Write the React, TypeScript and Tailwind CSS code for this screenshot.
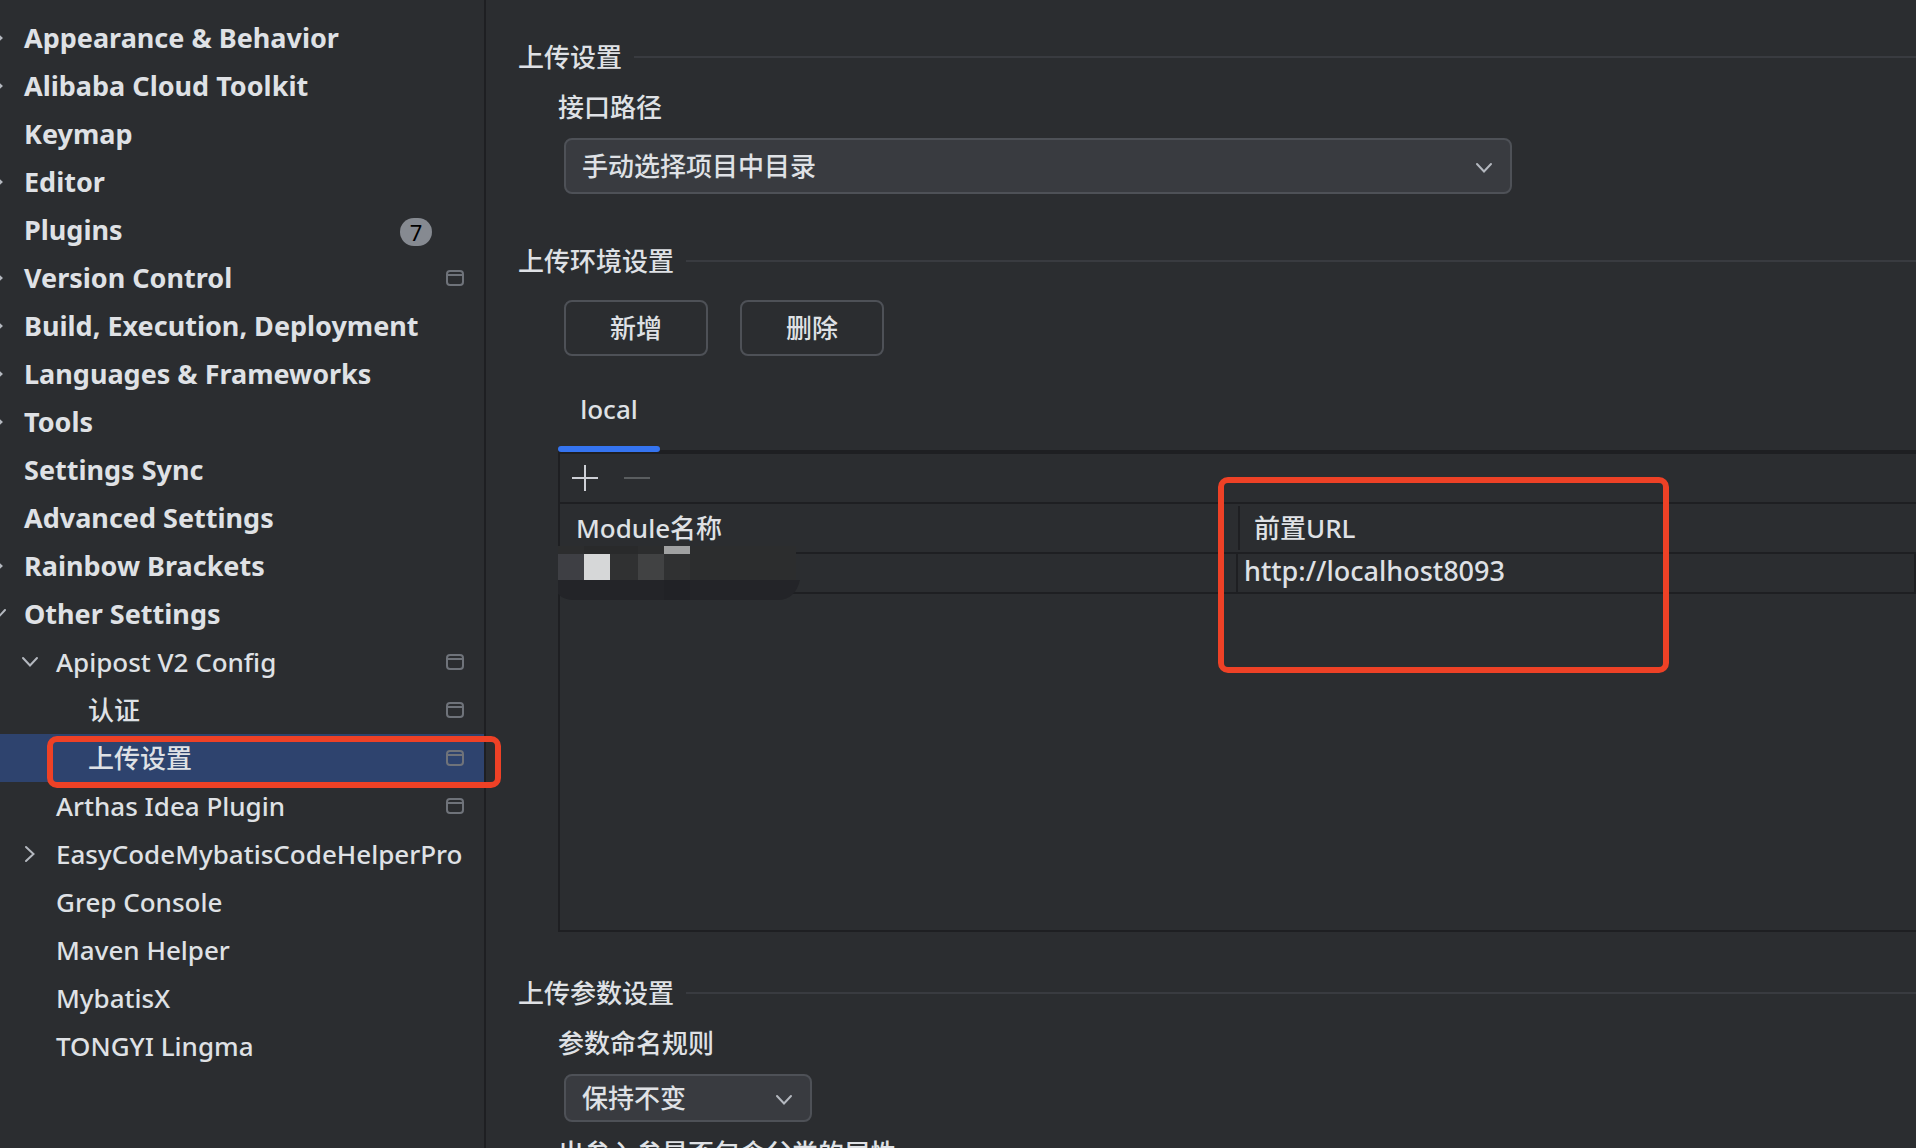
import { useState } from 'react';
import clsx from 'clsx';

type NavItem = {
  label: string;
  level?: 0 | 1 | 2;
  arrow?: 'right' | 'down';
  badge?: number;
  project?: boolean;
};

const NAV_ITEMS: NavItem[] = [
  { label: 'Appearance & Behavior', arrow: 'right' },
  { label: 'Alibaba Cloud Toolkit', arrow: 'right' },
  { label: 'Keymap' },
  { label: 'Editor', arrow: 'right' },
  { label: 'Plugins', badge: 7 },
  { label: 'Version Control', arrow: 'right', project: true },
  { label: 'Build, Execution, Deployment', arrow: 'right' },
  { label: 'Languages & Frameworks', arrow: 'right' },
  { label: 'Tools', arrow: 'right' },
  { label: 'Settings Sync' },
  { label: 'Advanced Settings' },
  { label: 'Rainbow Brackets', arrow: 'right' },
  { label: 'Other Settings', arrow: 'down' },
  { label: 'Apipost V2 Config', level: 1, arrow: 'down', project: true },
  { label: '认证', level: 2, project: true },
  { label: '上传设置', level: 2, project: true },
  { label: 'Arthas Idea Plugin', level: 1, project: true },
  { label: 'EasyCodeMybatisCodeHelperPro', level: 1, arrow: 'right' },
  { label: 'Grep Console', level: 1 },
  { label: 'Maven Helper', level: 1 },
  { label: 'MybatisX', level: 1 },
  { label: 'TONGYI Lingma', level: 1 },
];

function Chevron({ direction, className }: { direction: 'right' | 'down'; className?: string }) {
  return (
    <svg
      viewBox="0 0 32 32"
      fill="none"
      stroke="currentColor"
      strokeWidth="2"
      strokeLinecap="round"
      className={clsx('size-8 shrink-0 text-[#b4b8bf]', className)}
    >
      <path d={direction === 'down' ? 'M9 12l7 7.500l7-7.500' : 'M12 9l7.500 7l-7.500 7'} />
    </svg>
  );
}

function ProjectIcon() {
  return (
    <svg viewBox="0 0 18 16" fill="none" stroke="#6f737a" strokeWidth="2" className="h-4 w-[18px]">
      <rect x="1" y="1" width="16" height="14" rx="3" />
      <path d="M1 5h16" />
    </svg>
  );
}

function NavRow({ item, selected, onSelect }: { item: NavItem; selected: boolean; onSelect: () => void }) {
  const level = item.level ?? 0;
  return (
    <li className={clsx('relative h-12', selected && 'bg-[#2e436e]')}>
      <a
        href="#"
        onClick={(e) => {
          e.preventDefault();
          onSelect();
        }}
        className={clsx(
          'flex h-full items-center pr-5 whitespace-nowrap',
          level === 0 && '-ml-[18px] text-[27px] font-bold',
          level === 1 && 'pl-3.5',
          level === 2 && 'pl-[46px]',
        )}
      >
        {item.arrow ? <Chevron direction={item.arrow} /> : <span className="w-8 shrink-0" />}
        <span className="ml-2.5 flex-1">{item.label}</span>
        {item.badge && (
          <span className="mt-1 mr-8 flex h-7 w-8 items-center justify-center rounded-full bg-[#868a91] text-[22px] font-normal text-black">
            {item.badge}
          </span>
        )}
        {item.project && <ProjectIcon />}
      </a>
      {selected && (
        <div className="pointer-events-none absolute top-0.5 -right-[17px] left-[47px] z-10 h-[52px] rounded-[10px] border-[6px] border-[#ee4126]" />
      )}
    </li>
  );
}

function SectionTitle({ children, className }: { children: string; className?: string }) {
  return (
    <h2 className={clsx('flex h-[38px] items-center gap-3 whitespace-nowrap', className)}>
      {children}
      <span className="h-0.5 flex-1 bg-[#393b40]" />
    </h2>
  );
}

function Dropdown({ id, options, className }: { id: string; options: string[]; className?: string }) {
  return (
    <div className={clsx('relative ml-[46px]', className)}>
      <select
        id={id}
        className="size-full appearance-none rounded-lg border-2 border-[#4e5157] bg-[#393b40] pr-12 pl-4 outline-none"
      >
        {options.map((o) => (
          <option key={o}>{o}</option>
        ))}
      </select>
      <Chevron direction="down" className="pointer-events-none absolute top-1 right-3 bottom-0 my-auto" />
    </div>
  );
}

function OutlineButton({ children }: { children: string }) {
  return (
    <button type="button" className="h-14 w-36 rounded-lg border-2 border-[#4e5157]">
      {children}
    </button>
  );
}

// Pixelated module name, kept private
function MaskedName() {
  return (
    <svg
      viewBox="0 0 242 54"
      className="pointer-events-none absolute -top-2 -left-0.5 h-[54px] w-[242px]"
      aria-hidden="true"
    >
      <rect width="238" height="34" fill="#2c2d2e" />
      <path d="M0 34H242Q237 54 220 54H16Q6 54 0 48Z" fill="#232428" />
      <rect x="106" y="34" width="26" height="20" fill="#212226" />
      <rect x="26" width="54" height="8" fill="#292a2b" />
      <rect x="106" width="26" height="8" fill="#a0a1a2" />
      <rect y="8" width="26" height="26" fill="#3e3f44" />
      <rect x="26" y="8" width="26" height="26" fill="#d6d7d8" />
      <rect x="52" y="8" width="28" height="26" fill="#303132" />
      <rect x="80" y="8" width="26" height="26" fill="#414243" />
      <rect x="106" y="8" width="26" height="26" fill="#303132" />
    </svg>
  );
}

function EnvironmentPanel() {
  return (
    <div className="mt-2.5 ml-10">
      <div role="tablist" className="flex h-[88px] border-b-4 border-[#1e1f22]">
        <button type="button" role="tab" aria-selected="true" className="relative h-[86px] w-[102px]">
          local
          <span className="absolute inset-x-0 bottom-0 h-1.5 rounded-full bg-[#3574f0]" />
        </button>
      </div>
      <div className="relative h-[478px] border-b-2 border-l-2 border-[#1e1f22]">
        <div className="flex h-[50px] items-center gap-[26px] border-b-2 border-[#1e1f22] pl-3">
          <button type="button" aria-label="Add">
            <svg viewBox="0 0 26 26" className="size-[26px]" stroke="#ced0d6" strokeWidth="2">
              <path d="M13 0v26M0 13h26" />
            </svg>
          </button>
          <button type="button" aria-label="Remove" disabled>
            <svg viewBox="0 0 26 26" className="size-[26px]" stroke="#5a5d5f" strokeWidth="2">
              <path d="M0 13h26" />
            </svg>
          </button>
        </div>
        <table className="w-full table-fixed border-separate border-spacing-0 text-left">
          <thead>
            <tr className="h-[50px]">
              <th className="border-b-2 border-[#1e1f22] p-0 pl-4 font-medium">Module名称</th>
              <th className="border-b-2 border-[#1e1f22] p-0 font-medium">
                <div className="flex h-11 items-center border-l-2 border-[#1e1f22] pl-3.5">前置URL</div>
              </th>
            </tr>
          </thead>
          <tbody>
            <tr className="h-10">
              <td className="relative border-r-2 border-b-2 border-[#1e1f22] p-0">
                <MaskedName />
              </td>
              <td className="border-r-2 border-b-2 border-[#1e1f22] p-0 pb-1 pl-1.5 text-[27px] leading-8">
                http://localhost8093
              </td>
            </tr>
          </tbody>
        </table>
        <div className="pointer-events-none absolute top-[23px] left-[658px] h-[196px] w-[451px] rounded-[10px] border-[6px] border-[#ee4126]" />
      </div>
    </div>
  );
}

export default function App() {
  const [selected, setSelected] = useState('上传设置');

  return (
    <div className="flex h-screen overflow-hidden bg-[#2b2d30] font-['Noto_Sans','Noto_Sans_CJK_SC',sans-serif] text-[26px] leading-[38px] font-medium text-[#dfe1e5]">
      <nav className="w-[486px] shrink-0 border-r-2 border-[#1e1f22] pt-3.5">
        <ul>
          {NAV_ITEMS.map((item) => (
            <NavRow
              key={item.label}
              item={item}
              selected={item.label === selected}
              onSelect={() => setSelected(item.label)}
            />
          ))}
        </ul>
      </nav>

      <main className="min-w-0 flex-1 pt-[38px] pl-8">
        <SectionTitle>上传设置</SectionTitle>
        <label htmlFor="api-path" className="mt-3 ml-10 block">
          接口路径
        </label>
        <Dropdown id="api-path" options={['手动选择项目中目录']} className="mt-3 h-14 max-w-[948px]" />

        <SectionTitle className="mt-12">上传环境设置</SectionTitle>
        <div className="mt-5 ml-[46px] flex gap-8">
          <OutlineButton>新增</OutlineButton>
          <OutlineButton>删除</OutlineButton>
        </div>
        <EnvironmentPanel />

        <SectionTitle className="mt-[42px]">上传参数设置</SectionTitle>
        <label htmlFor="naming-rule" className="mt-3 ml-10 block">
          参数命名规则
        </label>
        <Dropdown id="naming-rule" options={['保持不变']} className="mt-3 h-12 w-[248px]" />
        <p className="mt-3 ml-10">出参入参是否包含父类的属性</p>
      </main>
    </div>
  );
}
